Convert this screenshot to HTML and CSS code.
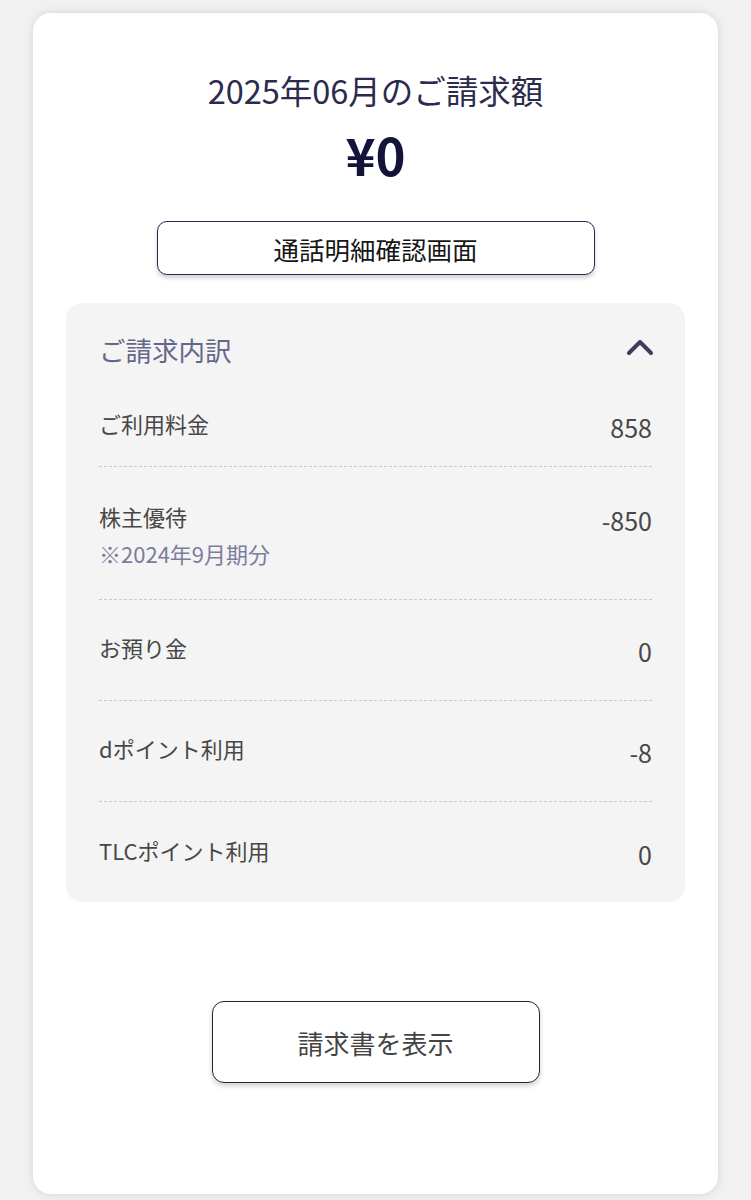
FILE: index.html
```html
<!DOCTYPE html>
<html lang="ja">
<head>
<meta charset="utf-8">
<title>ご請求額</title>
<link rel="stylesheet" href="styles.css">
</head>
<body>
<div class="page">
  <div class="card">
    <h1 class="title">2025年06月のご請求額</h1>
    <div class="amount">¥0</div>
    <button class="btn-detail">通話明細確認画面</button>
    <section class="panel">
      <div class="panel-head">
        <span class="panel-title">ご請求内訳</span>
        <svg class="chev" width="28" height="18" viewBox="0 0 28 18"><path d="M3 15 L14 4 L25 15" fill="none" stroke="#3d3d5e" stroke-width="4" stroke-linecap="round" stroke-linejoin="round"/></svg>
      </div>
      <div class="row row-first">
        <div class="label">ご利用料金</div>
        <div class="value">858</div>
      </div>
      <div class="row row-second">
        <div class="label">株主優待<div class="sub">※2024年9月期分</div></div>
        <div class="value">-850</div>
      </div>
      <div class="row">
        <div class="label">お預り金</div>
        <div class="value">0</div>
      </div>
      <div class="row">
        <div class="label">dポイント利用</div>
        <div class="value">-8</div>
      </div>
      <div class="row row-last">
        <div class="label">TLCポイント利用</div>
        <div class="value">0</div>
      </div>
    </section>
    <button class="btn-invoice">請求書を表示</button>
  </div>
</div>
</body>
</html>
```
FILE: styles.css
```css
html, body {
  margin: 0;
  padding: 0;
}
body {
  background: #f1f1f1;
  font-family: "Noto Sans CJK JP", "Noto Sans", sans-serif;
}
.page {
  padding: 13px 33px 7px;
}
.card {
  background: #ffffff;
  border-radius: 18px;
  box-shadow: 0 0 10px rgba(0, 0, 0, 0.12);
  padding: 56px 33px 111px;
  display: flex;
  flex-direction: column;
  align-items: center;
}
.title {
  margin: 0;
  font-size: 32.5px;
  font-weight: 400;
  line-height: 42px;
  color: #2b2b4d;
}
.amount {
  margin-top: 15px;
  font-size: 51px;
  font-weight: 600;
  line-height: 56px;
  color: #14143a;
}
.btn-detail {
  margin-top: 39px;
  width: 438px;
  height: 54px;
  background: #fff;
  border: 1.5px solid #2a2a4a;
  border-radius: 10px;
  box-shadow: 0 3px 4px rgba(0, 0, 0, 0.18);
  font-family: inherit;
  font-size: 25.5px;
  color: #161616;
  padding: 0;
}
.panel {
  margin-top: 28px;
  align-self: stretch;
  background: #f4f4f4;
  border-radius: 16px;
  padding: 31px 33px 0;
}
.panel-head {
  display: flex;
  justify-content: space-between;
  align-items: center;
  height: 32px;
}
.panel-title {
  font-size: 26.5px;
  line-height: 32px;
  color: #66668a;
}
.chev {
  margin-right: -2px;
  margin-top: -6px;
}
.row {
  display: flex;
  justify-content: space-between;
  align-items: flex-start;
  padding: 33px 0 35px;
  border-top: 1px dashed #c9c9c9;
}
.row-first {
  border-top: none;
  padding: 43px 0 25px;
}
.row-second {
  padding: 35px 0 32px;
}
.row-last {
  padding: 34px 0 34px;
}
.label {
  font-size: 22px;
  line-height: 28px;
  color: #474747;
}
.sub {
  margin-top: 9px;
  font-size: 22px;
  line-height: 28px;
  color: #7c7c9c;
}
.value {
  font-size: 25px;
  line-height: 28px;
  padding-top: 4px;
  color: #474747;
}
.btn-invoice {
  margin-top: 99px;
  width: 328px;
  height: 82px;
  background: #fff;
  border: 1.5px solid #23233f;
  border-radius: 12px;
  box-shadow: 0 3px 5px rgba(0, 0, 0, 0.18);
  font-family: inherit;
  font-size: 26px;
  color: #444444;
  padding: 0;
}
```
